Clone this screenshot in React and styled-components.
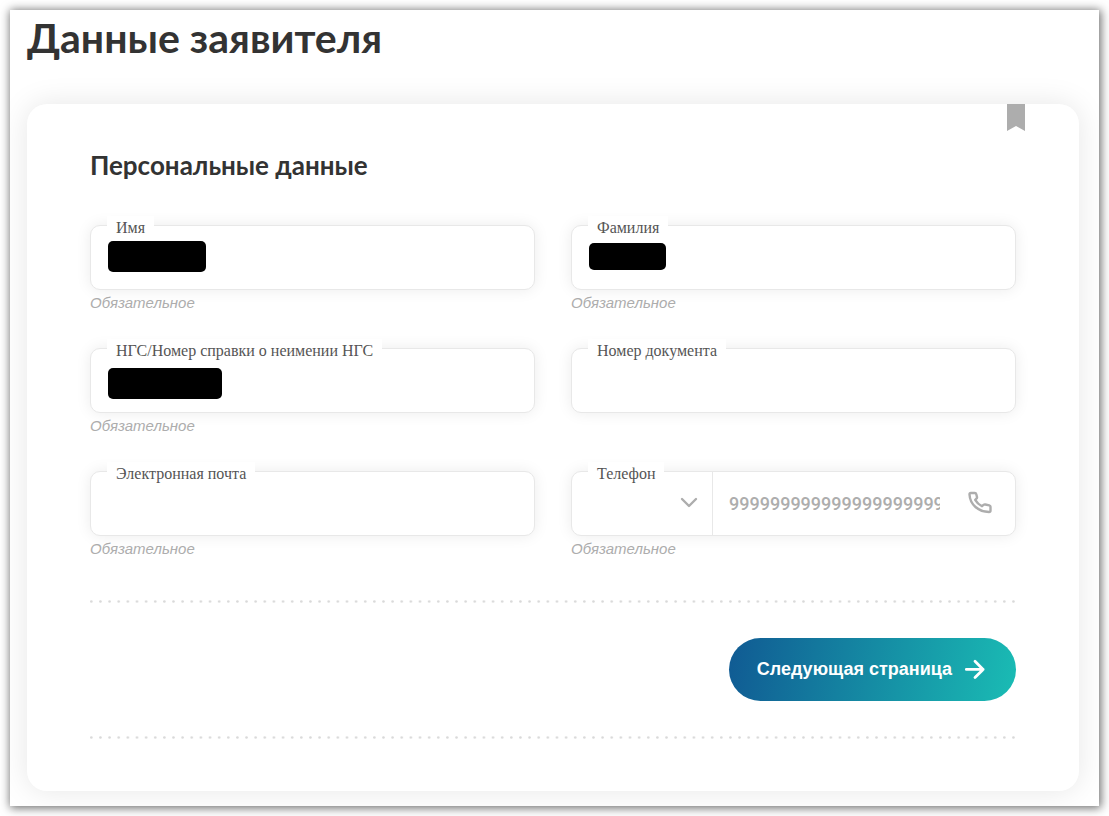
import React from "react";
import styled, { createGlobalStyle } from "styled-components";

const GlobalStyle = createGlobalStyle`
  *, *::before, *::after { box-sizing: border-box; }
  body {
    margin: 0;
    background: #fff;
    color: #333;
    font-family: "Liberation Sans", Arial, sans-serif;
  }
`;

const Sheet = styled.main`
  margin: 10px;
  padding: 0 20px 15px 17px;
  background: #fff;
  box-shadow: 1px 1px 9px 1px rgba(0, 0, 0, 0.58);
  overflow: hidden;
`;

const PageTitle = styled.h1`
  margin: 0 0 38px;
  font: 700 41px/56px Lato, "Open Sans", sans-serif;
`;

const Card = styled.form`
  position: relative;
  padding: 45px 63px 52px;
  border-radius: 20px;
  background: #fff;
  box-shadow: 0 0 30px rgba(0, 0, 0, 0.1);
`;

const BookmarkButton = styled.button`
  position: absolute;
  top: 0;
  right: 53px;
  padding: 0;
  border: 0;
  background: none;
  line-height: 0;
  cursor: pointer;
`;

const SectionTitle = styled.h2`
  margin: 0 0 44px;
  font: 700 26px/32px Lato, "Open Sans", sans-serif;
`;

const FieldGrid = styled.div`
  display: grid;
  grid-template-columns: repeat(2, minmax(0, 1fr));
  gap: 32px 36px;
`;

const Label = styled.label`
  position: absolute;
  top: -10px;
  left: 16px;
  padding: 0 9px;
  background: #fff;
  color: #555;
  font: 16px/24px "Liberation Serif", "Times New Roman", serif;
`;

const Control = styled.div`
  position: relative;
  display: flex;
  align-items: stretch;
  height: 65px;
  border: 1px solid #e8e8e8;
  border-radius: 10px;
  background: #fff;
  box-shadow: 0 0 15px rgba(0, 0, 0, 0.08);
`;

const TextInput = styled.input`
  flex: 1;
  min-width: 0;
  padding: 0 16px;
  border: 0;
  border-radius: 10px;
  outline: 0;
  background: transparent;
  color: #333;
  font: 500 18px Roboto, "Liberation Sans", sans-serif;
  &::placeholder { color: #adadad; opacity: 1; }
`;

const Redaction = styled.span`
  position: absolute;
  top: ${(p) => p.$top}px;
  left: 17px;
  width: ${(p) => p.$width}px;
  height: ${(p) => p.$height}px;
  border-radius: 5px;
  background: #000;
`;

const Hint = styled.p`
  margin: 0;
  height: 26px;
  color: #adadad;
  font-size: 15px;
  line-height: 26px;
  font-style: italic;
`;

const CodePicker = styled.div`
  display: grid;
  grid-template-columns: 1fr 24px;
  align-items: center;
  width: 141px;
  padding-right: 11px;
  border-right: 1px solid #e8e8e8;
  color: #adadad;
  > * { grid-row: 1; }
  > svg { grid-column: 2; pointer-events: none; }
`;

const CodeSelect = styled.select`
  grid-column: 1 / 3;
  align-self: stretch;
  min-width: 0;
  border: 0;
  outline: 0;
  background: transparent;
  appearance: none;
  font-size: 18px;
`;

const PhoneIconSlot = styled.span`
  display: flex;
  align-items: center;
  padding: 0 23px 2px 12px;
  color: #adadad;
`;

const DottedRule = styled.svg`
  display: block;
  width: 100%;
  height: 3px;
  margin-top: ${(p) => p.$gap}px;
`;

const Actions = styled.div`
  display: flex;
  justify-content: flex-end;
  margin-top: 35px;
`;

const NextButton = styled.button`
  display: flex;
  align-items: center;
  gap: 10px;
  height: 63px;
  padding: 0 28px;
  border: 0;
  border-radius: 32px;
  background: linear-gradient(100deg, #105a93, #1abcb4);
  color: #fff;
  font: bold 18px "Liberation Sans", Arial, sans-serif;
  cursor: pointer;
`;

function Icon({ size = 24, stroke = 2, children }) {
  return (
    <svg
      width={size}
      height={size}
      viewBox="0 0 24 24"
      fill="none"
      stroke="currentColor"
      strokeWidth={stroke}
      strokeLinecap="round"
      strokeLinejoin="round"
      aria-hidden="true"
    >
      {children}
    </svg>
  );
}

function Field({ id, label, hint, redaction, type = "text" }) {
  return (
    <div>
      <Control>
        <Label htmlFor={id}>{label}</Label>
        <TextInput id={id} type={type} />
        {redaction && (
          <Redaction $top={redaction[0]} $width={redaction[1]} $height={redaction[2]} />
        )}
      </Control>
      <Hint>{hint}</Hint>
    </div>
  );
}

function Dots({ id, gap }) {
  return (
    <DottedRule $gap={gap} aria-hidden="true">
      <defs>
        <pattern id={id} width="9.13" height="3" patternUnits="userSpaceOnUse">
          <circle cx="1.3" cy="1.5" r="1.3" fill="#d9d9d9" />
        </pattern>
      </defs>
      <rect width="100%" height="3" fill={`url(#${id})`} />
    </DottedRule>
  );
}

const required = "Обязательное";

export default function App() {
  return (
    <>
      <GlobalStyle />
      <Sheet>
        <PageTitle>Данные заявителя</PageTitle>
        <Card onSubmit={(e) => e.preventDefault()}>
          <BookmarkButton type="button" aria-label="Закладка">
            <svg width="20" height="27" viewBox="0 0 20 27" aria-hidden="true">
              <path d="M1 0h18v27l-9-5-9 5z" fill="#adadad" />
            </svg>
          </BookmarkButton>
          <SectionTitle>Персональные данные</SectionTitle>
          <FieldGrid>
            <Field id="name" label="Имя" hint={required} redaction={[15, 98, 31]} />
            <Field id="surname" label="Фамилия" hint={required} redaction={[17, 77, 27]} />
            <Field
              id="ngs"
              label="НГС/Номер справки о неимении НГС"
              hint={required}
              redaction={[19, 114, 31]}
            />
            <Field id="document" label="Номер документа" />
            <Field id="email" label="Электронная почта" type="email" hint={required} />
            <div>
              <Control>
                <Label htmlFor="phone">Телефон</Label>
                <CodePicker>
                  <CodeSelect aria-label="Код страны" defaultValue="">
                    <option value="" />
                  </CodeSelect>
                  <Icon stroke={2.4}>
                    <path d="m5 7 7 7 7-7" />
                  </Icon>
                </CodePicker>
                <TextInput id="phone" type="tel" placeholder="999999999999999999999999" />
                <PhoneIconSlot>
                  <Icon stroke={2.4}>
                    <path d="M2.800 2H6.800Q8 2 8.300 3.200L9 6Q9.200 7 8.400 7.700L7.200 8.800Q9.600 13 14 15.200L15.500 13.900Q16.300 13.300 17.300 13.500L21.300 14.400Q22.500 14.700 22.500 15.800V19.500Q22.500 21 21 21C10.500 21 2 13.500 1.500 3.500Q1.500 2 2.800 2Z" />
                  </Icon>
                </PhoneIconSlot>
              </Control>
              <Hint>{required}</Hint>
            </div>
          </FieldGrid>
          <Dots id="dots-top" gap={38} />
          <Actions>
            <NextButton type="submit">
              Следующая страница
              <Icon size={26} stroke={2.6}>
                <path d="M4 11.500h15.500M12 4 19.500 11.500 12 19" />
              </Icon>
            </NextButton>
          </Actions>
          <Dots id="dots-bottom" gap={35} />
        </Card>
      </Sheet>
    </>
  );
}
